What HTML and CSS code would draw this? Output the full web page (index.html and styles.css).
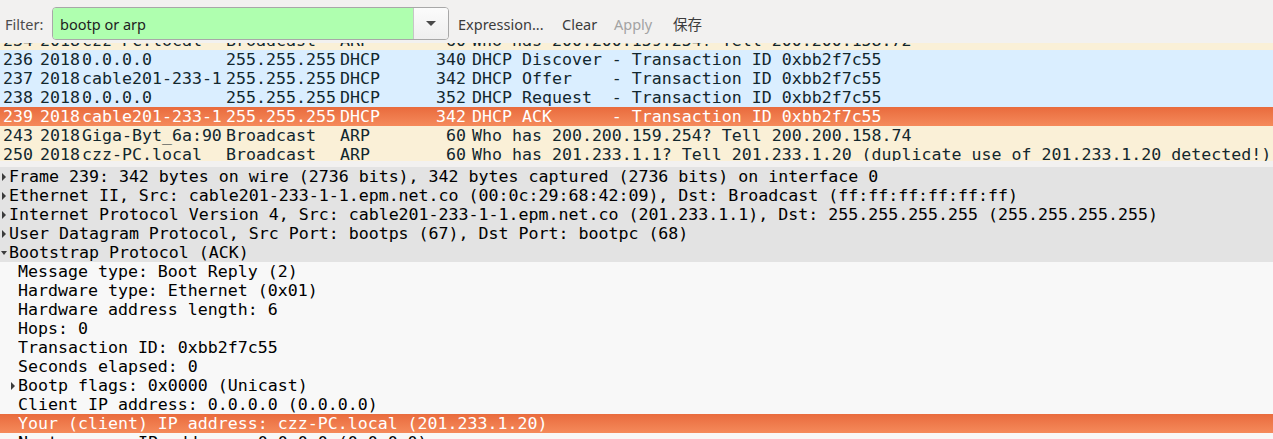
FILE: index.html
```html
<!DOCTYPE html>
<html>
<head>
<meta charset="utf-8">
<link rel="stylesheet" href="styles.css">
</head>
<body>
<div class="app">
  <div class="toolbar">
    <span class="label">Filter:</span>
    <div class="combo">
      <div class="combo-entry">bootp or arp</div>
      <div class="combo-btn"><span class="arrow"></span></div>
    </div>
    <span class="btn btn-expr">Expression...</span>
    <span class="btn btn-clear">Clear</span>
    <span class="btn btn-apply disabled">Apply</span>
    <span class="btn btn-save">保存</span>
  </div>

  <div class="plist">
    <div class="plist-inner">
      <div class="row arp"><span class="c-no">234</span><span class="c-time">2018</span><span class="c-src">czz-PC.local</span><span class="c-dst">Broadcast</span><span class="c-proto">ARP</span><span class="c-len">60</span><span class="c-info">Who has 200.200.159.254? Tell 200.200.158.72</span></div>
      <div class="row udp"><span class="c-no">236</span><span class="c-time">2018</span><span class="c-src">0.0.0.0</span><span class="c-dst">255.255.255</span><span class="c-proto">DHCP</span><span class="c-len">340</span><span class="c-info">DHCP Discover - Transaction ID 0xbb2f7c55</span></div>
      <div class="row udp"><span class="c-no">237</span><span class="c-time">2018</span><span class="c-src">cable201-233-1</span><span class="c-dst">255.255.255</span><span class="c-proto">DHCP</span><span class="c-len">342</span><span class="c-info">DHCP Offer    - Transaction ID 0xbb2f7c55</span></div>
      <div class="row udp"><span class="c-no">238</span><span class="c-time">2018</span><span class="c-src">0.0.0.0</span><span class="c-dst">255.255.255</span><span class="c-proto">DHCP</span><span class="c-len">352</span><span class="c-info">DHCP Request  - Transaction ID 0xbb2f7c55</span></div>
      <div class="row selected"><span class="c-no">239</span><span class="c-time">2018</span><span class="c-src">cable201-233-1</span><span class="c-dst">255.255.255</span><span class="c-proto">DHCP</span><span class="c-len">342</span><span class="c-info">DHCP ACK      - Transaction ID 0xbb2f7c55</span></div>
      <div class="row arp"><span class="c-no">243</span><span class="c-time">2018</span><span class="c-src">Giga-Byt_6a:90</span><span class="c-dst">Broadcast</span><span class="c-proto">ARP</span><span class="c-len">60</span><span class="c-info">Who has 200.200.159.254? Tell 200.200.158.74</span></div>
      <div class="row arp"><span class="c-no">250</span><span class="c-time">2018</span><span class="c-src">czz-PC.local</span><span class="c-dst">Broadcast</span><span class="c-proto">ARP</span><span class="c-len">60</span><span class="c-info">Who has 201.233.1.1? Tell 201.233.1.20 (duplicate use of 201.233.1.20 detected!)</span></div>
    </div>
  </div>

  <div class="details">
    <div class="drow top"><span class="exp closed"></span><span class="dtext">Frame 239: 342 bytes on wire (2736 bits), 342 bytes captured (2736 bits) on interface 0</span></div>
    <div class="drow top"><span class="exp closed"></span><span class="dtext">Ethernet II, Src: cable201-233-1-1.epm.net.co (00:0c:29:68:42:09), Dst: Broadcast (ff:ff:ff:ff:ff:ff)</span></div>
    <div class="drow top"><span class="exp closed"></span><span class="dtext">Internet Protocol Version 4, Src: cable201-233-1-1.epm.net.co (201.233.1.1), Dst: 255.255.255.255 (255.255.255.255)</span></div>
    <div class="drow top"><span class="exp closed"></span><span class="dtext">User Datagram Protocol, Src Port: bootps (67), Dst Port: bootpc (68)</span></div>
    <div class="drow top"><span class="exp open"></span><span class="dtext">Bootstrap Protocol (ACK)</span></div>
    <div class="drow child"><span class="exp"></span><span class="dtext">Message type: Boot Reply (2)</span></div>
    <div class="drow child"><span class="exp"></span><span class="dtext">Hardware type: Ethernet (0x01)</span></div>
    <div class="drow child"><span class="exp"></span><span class="dtext">Hardware address length: 6</span></div>
    <div class="drow child"><span class="exp"></span><span class="dtext">Hops: 0</span></div>
    <div class="drow child"><span class="exp"></span><span class="dtext">Transaction ID: 0xbb2f7c55</span></div>
    <div class="drow child"><span class="exp"></span><span class="dtext">Seconds elapsed: 0</span></div>
    <div class="drow child"><span class="exp closed"></span><span class="dtext">Bootp flags: 0x0000 (Unicast)</span></div>
    <div class="drow child"><span class="exp"></span><span class="dtext">Client IP address: 0.0.0.0 (0.0.0.0)</span></div>
    <div class="drow child selected"><span class="exp"></span><span class="dtext">Your (client) IP address: czz-PC.local (201.233.1.20)</span></div>
    <div class="drow child"><span class="exp"></span><span class="dtext">Next server IP address: 0.0.0.0 (0.0.0.0)</span></div>
  </div>
</div>
</body>
</html>
```

FILE: styles.css
```css
html, body {
  margin: 0;
  padding: 0;
  background: #f2f1f0;
}
body {
  width: 1273px;
  height: 439px;
  overflow: hidden;
}
.app {
  display: flex;
  flex-direction: column;
  height: 439px;
}

/* toolbar */
.toolbar {
  display: flex;
  align-items: center;
  height: 33px;
  padding: 7px 0 3px 5px;
  font-family: "Noto Sans", "Noto Sans CJK SC", sans-serif;
  font-size: 14.5px;
  line-height: 20px;
  color: #3c3c3c;
  flex: none;
}
.label {
  width: 47px;
  color: #4c4c4c;
}
.combo {
  display: flex;
  width: 397px;
  height: 33px;
  box-sizing: border-box;
  border: 1px solid #a8a8a8;
  border-radius: 4px;
  overflow: hidden;
}
.combo-entry {
  flex: 1;
  background: #afffaf;
  padding-left: 7px;
  display: flex;
  align-items: center;
  color: #1e1e1e;
  border-right: 1px solid #c6c6c6;
}
.combo-btn {
  width: 34px;
  background: linear-gradient(#fbfbfb, #efefef);
  display: flex;
  align-items: center;
  justify-content: center;
}
.arrow {
  width: 0;
  height: 0;
  border-left: 5px solid transparent;
  border-right: 5px solid transparent;
  border-top: 5px solid #4a4a4a;
}
.btn {
  box-sizing: border-box;
  padding-left: 9px;
  white-space: nowrap;
  color: #3c3c3c;
}
.btn-expr { width: 104px; }
.btn-clear { width: 52px; }
.btn-apply { width: 59px; }
.btn.disabled { color: #a3a3a3; }

/* packet list */
.plist {
  height: 118px;
  overflow: hidden;
  flex: none;
  font-family: "DejaVu Sans Mono", monospace;
  font-size: 16.6px;
}
.plist-inner {
  margin-top: -12px;
}
.row {
  display: flex;
  height: 19px;
  line-height: 19px;
  white-space: pre;
  color: #12272e;
}
.row span {
  display: block;
  overflow: hidden;
  flex: none;
  box-sizing: border-box;
}
.row.arp { background: #faf0d7; }
.row.udp { background: #daeeff; }
.row.selected {
  background: linear-gradient(#e96b3d, #f58a5b);
  color: #ffffff;
}
.c-no { width: 37px; padding-left: 3px; }
.c-time { width: 43px; padding-left: 3px; }
.c-src { width: 143px; padding-left: 2px; }
.c-dst { width: 114px; padding-left: 3px; }
.c-proto { width: 80px; padding-left: 3px; }
.c-len { width: 52px; padding-right: 3px; text-align: right; }
.row .c-info { flex: 1; padding-left: 3px; }

/* details */
.details {
  margin-top: 6px;
  flex: 1;
  overflow: hidden;
  background: #f8f8f8;
  font-family: "DejaVu Sans Mono", monospace;
  font-size: 16.6px;
  color: #000;
}
.drow {
  display: flex;
  align-items: center;
  height: 19px;
  line-height: 19px;
  white-space: pre;
}
.drow.top { background: #e3e3e3; }
.drow.child { padding-left: 9px; }
.drow.selected {
  background: linear-gradient(#e96b3d, #f58a5b);
  color: #ffffff;
}
.exp {
  width: 9px;
  height: 19px;
  flex: none;
  display: flex;
  align-items: center;
  justify-content: flex-start;
  padding-left: 2px;
  box-sizing: border-box;
}
.exp.closed::before {
  content: "";
  width: 0;
  height: 0;
  border-left: 4px solid #3c3c3c;
  border-top: 4px solid transparent;
  border-bottom: 4px solid transparent;
}
.exp.open { padding-left: 1px; }
.exp.open::before {
  content: "";
  width: 0;
  height: 0;
  border-top: 4px solid #3c3c3c;
  border-left: 3.5px solid transparent;
  border-right: 3.5px solid transparent;
}
.dtext {
  flex: 1;
  overflow: hidden;
}
```
